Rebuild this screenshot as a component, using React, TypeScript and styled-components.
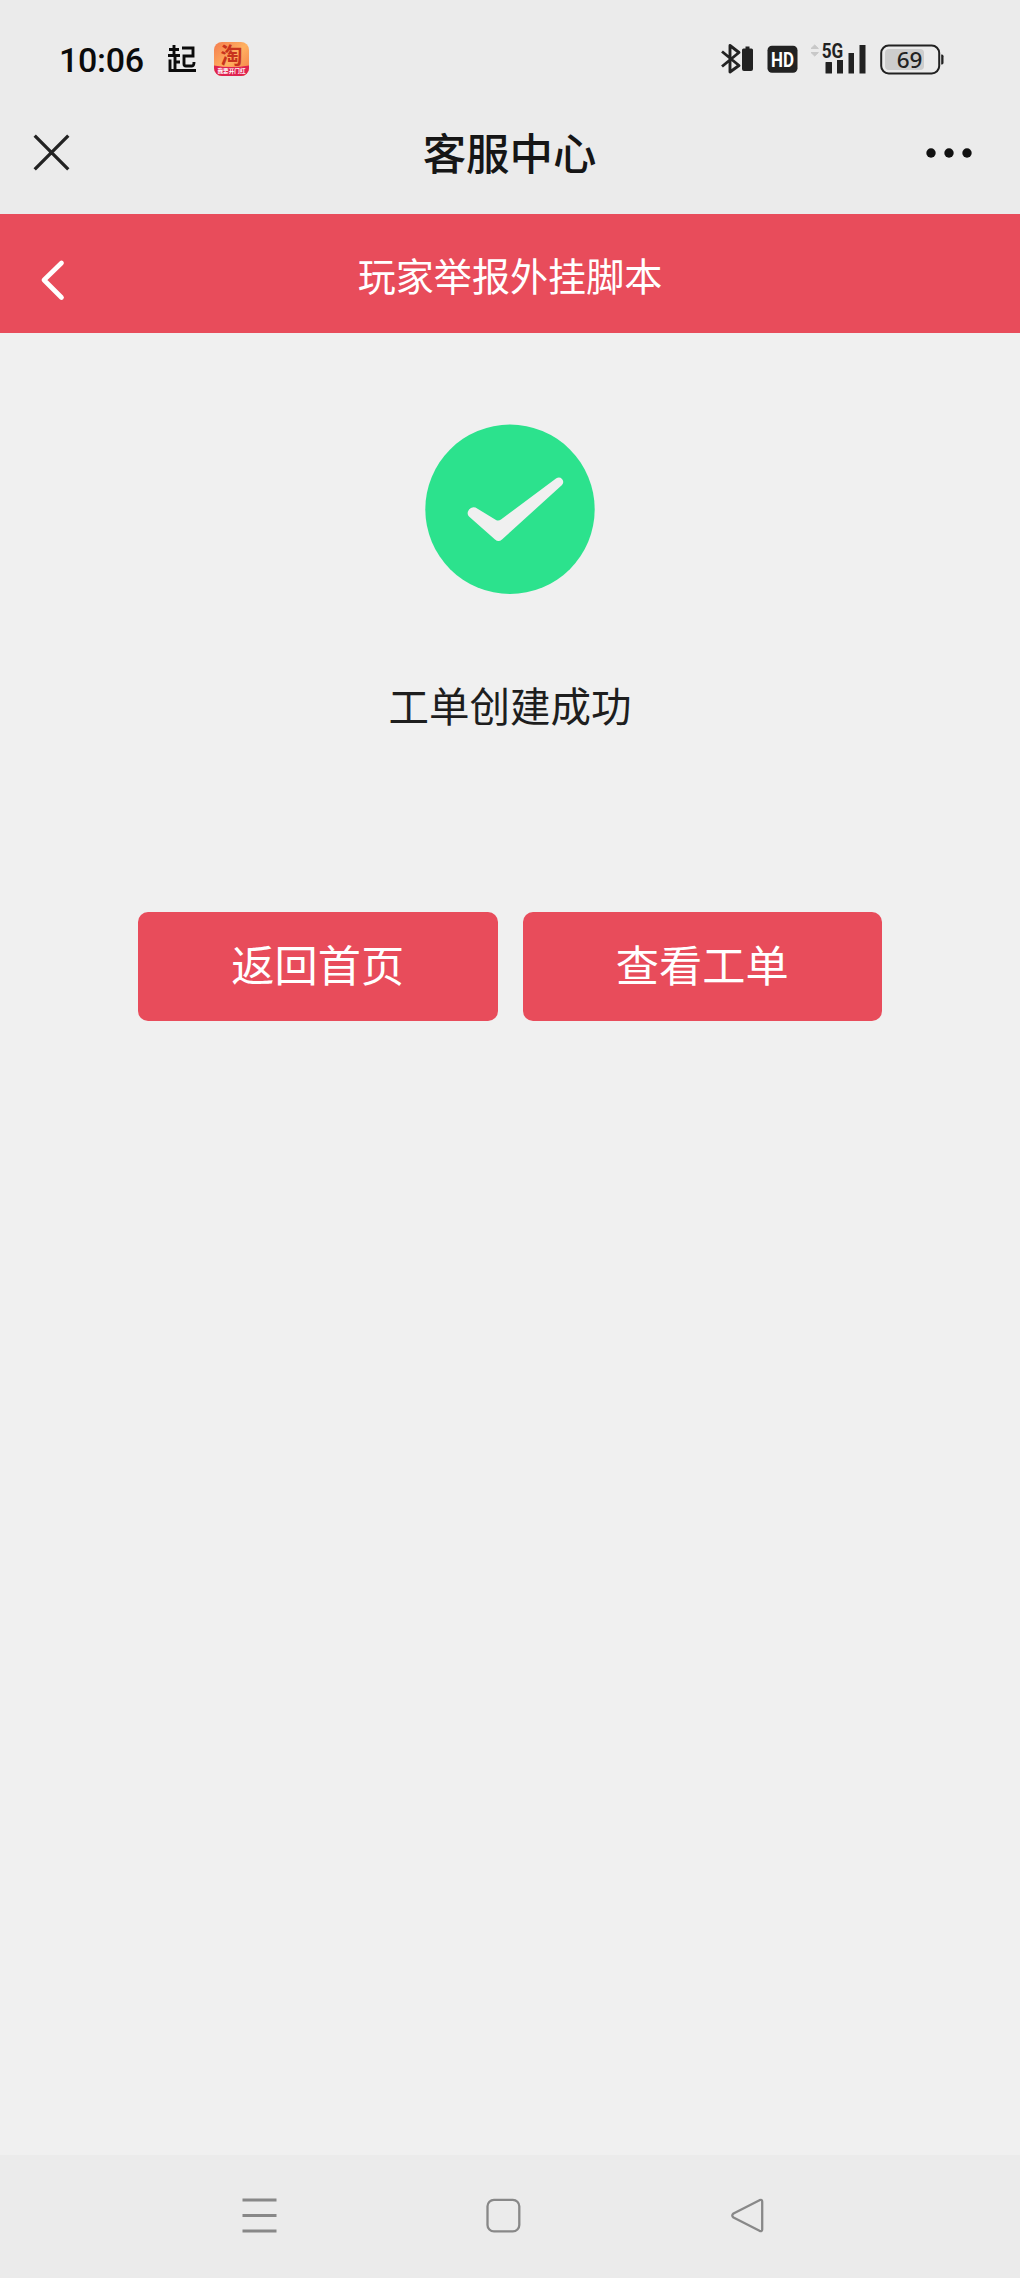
import React from "react";
import styled, { createGlobalStyle } from "styled-components";

const cjk = `Roboto, "Noto Sans CJK SC", sans-serif`;

const GlobalStyle = createGlobalStyle`
  * { box-sizing: border-box; }
  body { margin: 0; background: #f0f0f0; }
`;

const Screen = styled.div`
  width: 1020px;
  height: 2278px;
  display: flex;
  flex-direction: column;
  background: #f0f0f0;
  font-family: ${cjk};
  overflow: hidden;
`;

const StatusBar = styled.header`
  height: 118px;
  flex: none;
  display: flex;
  justify-content: space-between;
  align-items: center;
  padding: 0 76px 0 59px;
  background: #ebebeb;
`;

const StatusGroup = styled.div`
  display: flex;
  align-items: center;
`;

const Clock = styled.time`
  width: 109px;
  font: 500 34px/40px Roboto, sans-serif;
  letter-spacing: -0.3px;
  color: #0b0b0b;
  padding-top: 2px;
`;

const Notice = styled.div`
  display: flex;
  width: 46px;
`;

const Icon = styled.svg<{ $gap?: number }>`
  display: block;
  flex: none;
  overflow: visible;
  margin-left: ${(p) => p.$gap ?? 0}px;
`;

const TitleBar = styled.div`
  height: 96px;
  flex: none;
  display: grid;
  grid-template-columns: 120px 1fr 120px;
  align-items: center;
  padding: 0 48px 0 33px;
  background: #ebebeb;
`;

const Title = styled.h1`
  margin: 0;
  padding: 0 0 20px 14px;
  text-align: center;
  font: 500 43.4px/64px ${cjk};
  color: #161616;
`;

const TitleSide = styled.div<{ $end?: boolean }>`
  display: flex;
  justify-content: ${(p) => (p.$end ? "flex-end" : "flex-start")};
  padding-bottom: 27px;
`;

const PageBar = styled.div`
  height: 119px;
  flex: none;
  display: grid;
  grid-template-columns: 80px 1fr 80px;
  align-items: center;
  background: #e84c5b;
`;

const BackButton = styled.button`
  border: 0;
  padding: 13px 0 0 41px;
  background: none;
`;

const PageTitle = styled.h2`
  margin: 0;
  padding-top: 9px;
  text-align: center;
  font: 400 38.1px/56px ${cjk};
  color: #fff;
`;

const Result = styled.main`
  flex: 1;
  display: flex;
  flex-direction: column;
  align-items: center;
  padding-top: 91px;
`;

const Message = styled.p`
  margin: 84px 0 0;
  font: 400 40.5px/60px ${cjk};
  color: #1e1e1e;
`;

const Actions = styled.div`
  display: flex;
  gap: 25px;
  margin-top: 174px;
`;

const ActionButton = styled.button`
  width: 359.5px;
  height: 109px;
  border: 0;
  border-radius: 10px;
  padding: 2px 0 0;
  background: #e84c5b;
  color: #fff;
  font: 400 43.2px/64px ${cjk};
`;

const NavBar = styled.nav`
  height: 123px;
  flex: none;
  display: flex;
  align-items: center;
  gap: 209px;
  padding: 0 0 2px 242px;
  background: #ebebeb;
`;

export default function App() {
  return (
    <Screen>
      <GlobalStyle />
      <StatusBar>
        <StatusGroup>
          <Clock>10:06</Clock>
          <Notice>
            <Icon width="28" height="28" viewBox="0 0 28 28" fill="none" stroke="#0b0b0b" strokeWidth="2.900">
              <path d="M1 4.500h10M6 0v10.500M0 10.500h12M7 10.500V25M7 17h5M2 14.500V25.500h26" />
              <path d="M14 3h11v8H16v8q0 2 2 2h6q2 0 2-4" />
            </Icon>
          </Notice>
          <Icon width="35" height="35" viewBox="0 0 35 35">
            <defs>
              <linearGradient id="shop" x1="0" y1="0" x2="1" y2="1">
                <stop offset="0" stopColor="#f47b4e" />
                <stop offset=".5" stopColor="#ffb160" />
                <stop offset="1" stopColor="#f47a48" />
              </linearGradient>
              <clipPath id="shopClip">
                <rect width="35" height="34" rx="8" />
              </clipPath>
            </defs>
            <g clipPath="url(#shopClip)">
              <rect width="35" height="35" fill="url(#shop)" />
              <path d="M0 23.500q17.500 3 35 0V35H0z" fill="#df2350" />
            </g>
            <text x="17.500" y="21" textAnchor="middle" fontSize="22" fontWeight="700" fill="#c8331d" fontFamily="Noto Sans CJK SC, sans-serif">淘</text>
            <text x="17.500" y="31" textAnchor="middle" fontSize="5.600" fontWeight="700" fill="#fff" fontFamily="Noto Sans CJK SC, sans-serif">我要开门红</text>
          </Icon>
        </StatusGroup>
        <StatusGroup>
          <Icon width="32" height="32" viewBox="0 0 32 32" fill="none" stroke="#222" strokeWidth="2.900">
            <path d="M1 8.500 18 22.500 9 29V2.500L18 9.500 1 23.500" strokeLinejoin="round" />
            <path d="M24.500 3.500h4v2h2q1.500 0 1.500 1.500v19q0 2-2 2h-7q-2 0-2-2V7q0-1.500 1.500-1.500h2z" fill="#222" stroke="none" />
          </Icon>
          <Icon $gap={14} width="31" height="28" viewBox="0 0 31 28">
            <rect x=".5" y=".8" width="30" height="27" rx="4.500" fill="#222" />
            <text x="15.500" y="21.500" textAnchor="middle" textLength="23" lengthAdjust="spacingAndGlyphs" fontSize="20.500" fontWeight="700" fill="#fff" fontFamily="Roboto, sans-serif">HD</text>
          </Icon>
          <Icon $gap={12} width="57" height="32" viewBox="0 0 57 32">
            <path d="M1 5.500 4.700 2 8.400 5.500zM1 9.500h7.400L4.700 13z" fill="#c8c8c8" stroke="#c8c8c8" strokeLinejoin="round" />
            <path d="M16 19h5.500q.5 0 .5.500V30q0 .5-.5.500H16q-.5 0-.5-.5V19.500q0-.5.500-.5zM27 17h6v13.500h-6zM38.500 10H44v20.500h-5.500zM49.500 2H55.500v28.500h-6z" fill="#222" />
            <text x="11.800" y="14.500" textLength="21.500" lengthAdjust="spacingAndGlyphs" fontSize="19.500" fontWeight="700" fill="#222" fontFamily="Roboto, sans-serif">5G</text>
          </Icon>
          <Icon $gap={13} width="64" height="31" viewBox="0 0 64 31">
            <rect x="5" y="5" width="39" height="21" rx="4" fill="#cdcdcd" />
            <rect x="1.200" y="1.500" width="58" height="28" rx="7.500" fill="none" stroke="#222" strokeWidth="2" />
            <path d="M61.200 10.500H62q1.500 0 1.500 1.700v6.600q0 1.700-1.500 1.700h-.8z" fill="#222" />
            <text x="29.500" y="23.500" textAnchor="middle" fontSize="22.500" fontWeight="500" fill="#222" fontFamily="Noto Sans, sans-serif">69</text>
          </Icon>
        </StatusGroup>
      </StatusBar>
      <TitleBar>
        <TitleSide>
          <Icon width="37" height="37" viewBox="0 0 37 37" fill="none" stroke="#222" strokeWidth="3.300">
            <path d="m1.700 1.700 33.600 33.600M35.300 1.700 1.700 35.300" />
          </Icon>
        </TitleSide>
        <Title>客服中心</Title>
        <TitleSide $end>
          <Icon width="46" height="10" viewBox="0 0 46 10" fill="#111">
            <circle cx="5" cy="5" r="4.700" />
            <circle cx="23" cy="5" r="4.700" />
            <circle cx="41" cy="5" r="4.700" />
          </Icon>
        </TitleSide>
      </TitleBar>
      <PageBar>
        <BackButton aria-label="back">
          <Icon width="24" height="40" viewBox="0 0 24 40" fill="none" stroke="#fff" strokeWidth="4.700" strokeLinecap="round" strokeLinejoin="round">
            <path d="M20.500 3 3 20l17.500 17.500" />
          </Icon>
        </BackButton>
        <PageTitle>玩家举报外挂脚本</PageTitle>
      </PageBar>
      <Result>
        <Icon width="170" height="170" viewBox="0 0 170 170">
          <circle cx="85" cy="85.300" r="84.700" fill="#2ce28d" />
          <path d="M43.500 86.500q2.500-4.500 7-3L71 96q2.500 1.300 5-.5L131 54.500q3.500-2 6 .5 2.500 3 0 6L77 115.500q-3.500 3-7 0L44 92.500q-2.500-3-.5-6z" fill="#f0f0f0" />
        </Icon>
        <Message>工单创建成功</Message>
        <Actions>
          <ActionButton>返回首页</ActionButton>
          <ActionButton>查看工单</ActionButton>
        </Actions>
      </Result>
      <NavBar>
        <Icon width="35" height="36" viewBox="0 0 35 36" fill="none" stroke="#888" strokeWidth="2.800">
          <path d="M.5 2h34M.5 17.500h34M.5 33h34" />
        </Icon>
        <Icon width="35" height="36" viewBox="0 0 35 36" fill="none" stroke="#888" strokeWidth="2.300">
          <rect x="1.500" y="1.800" width="31.800" height="31.600" rx="6.500" />
        </Icon>
        <Icon width="35" height="36" viewBox="0 0 35 36" fill="none" stroke="#888" strokeWidth="2.300" strokeLinejoin="round">
          <path d="M3.500 15.500 29.500 2.200q2.700-1 2.700 1.300v28q0 2.300-2.700 1.300L3.500 19.500q-2.500-2 0-4z" />
        </Icon>
      </NavBar>
    </Screen>
  );
}
